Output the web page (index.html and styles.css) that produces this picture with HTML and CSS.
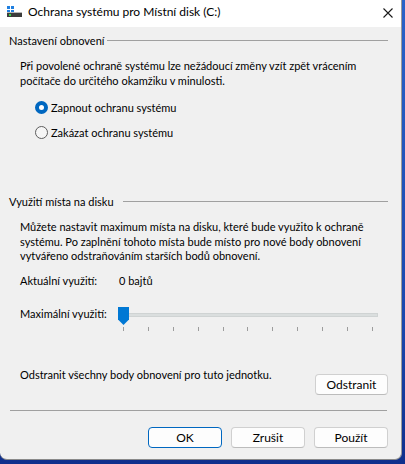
FILE: index.html
```html
<!DOCTYPE html>
<html lang="cs">
<head>
<meta charset="utf-8">
<title>Ochrana systému</title>
<link rel="stylesheet" href="styles.css">
</head>
<body>
<div class="window">
  <div class="titlebar">
    <svg class="app-icon" width="16" height="12" viewBox="0 0 16 12">
      <rect x="0" y="0" width="3" height="3" fill="#1f7fe0"/>
      <rect x="4" y="0" width="3" height="3" fill="#1f7fe0"/>
      <rect x="0" y="4" width="3" height="2" fill="#1f7fe0"/>
      <rect x="4" y="4" width="3" height="2" fill="#1f7fe0"/>
      <rect x="0" y="6" width="15" height="1" fill="#b8b8b8"/>
      <rect x="0" y="7" width="15" height="4" fill="#3c3c3c"/>
      <rect x="2" y="8" width="2" height="2" fill="#37d04a"/>
    </svg>
    <span class="title">Ochrana systému pro Místní disk (C:)</span>
    <svg class="close" width="10" height="10" viewBox="0 0 10 10">
      <path d="M0.5 0.5 L9.5 9.5 M9.5 0.5 L0.5 9.5" stroke="#1a1a1a" stroke-width="1.1" fill="none"/>
    </svg>
  </div>
  <div class="content">
    <div class="group-head group-head--first">
      <span class="group-label">Nastavení obnovení</span>
      <span class="group-line"></span>
    </div>
    <p class="para para--first">Při povolené ochraně systému lze nežádoucí změny vzít zpět vrácením<br>počítače do určitého okamžiku v minulosti.</p>
    <div class="radio radio--first">
      <span class="radio-dot radio-dot--on"></span>
      <span>Zapnout ochranu systému</span>
    </div>
    <div class="radio radio--second">
      <span class="radio-dot"></span>
      <span>Zakázat ochranu systému</span>
    </div>

    <div class="group-head group-head--second">
      <span class="group-label">Využití místa na disku</span>
      <span class="group-line"></span>
    </div>
    <p class="para para--second">Můžete nastavit maximum místa na disku, které bude využito k ochraně<br>systému. Po zaplnění tohoto místa bude místo pro nové body obnovení<br>vytvářeno odstraňováním starších bodů obnovení.</p>
    <div class="info-row">
      <span class="info-label">Aktuální využití:</span>
      <span>0 bajtů</span>
    </div>
    <div class="slider-row">
      <span class="slider-label">Maximální využití:</span>
      <div class="slider">
        <div class="track"></div>
        <div class="ticks">
          <i></i><i></i><i></i><i></i><i></i><i></i><i></i><i></i><i></i><i></i><i></i>
        </div>
        <div class="thumb"></div>
      </div>
    </div>
    <div class="delete-row">
      <span class="delete-text">Odstranit všechny body obnovení pro tuto jednotku.</span>
      <button class="btn btn--delete">Odstranit</button>
    </div>
    <div class="separator"></div>
    <div class="buttons">
      <button class="btn btn--wide btn--default">OK</button>
      <button class="btn btn--wide">Zrušit</button>
      <button class="btn btn--wide">Použít</button>
    </div>
  </div>
</div>
</body>
</html>
```

FILE: styles.css
```css
* { box-sizing: border-box; }
html, body {
  margin: 0;
  padding: 0;
}
body {
  width: 405px;
  height: 464px;
  overflow: hidden;
  background: linear-gradient(180deg, #2a62c8 0%, #1a47ad 70%, #0f2f8c 100%);
  font-family: Lato, "Liberation Sans", sans-serif;
  font-size: 11px;
  color: #000;
  white-space: nowrap;
}
.window {
  width: 402px;
  height: 460px;
  background: #f0f0f0;
  border-right: 1px solid #9a9a9a;
  border-bottom: 1px solid #8a8a8a;
  border-radius: 0 0 7px 7px;
  overflow: hidden;
  display: flex;
  flex-direction: column;
}
.titlebar {
  height: 27px;
  background: #ffffff;
  display: flex;
  align-items: center;
  padding-left: 7px;
  flex-shrink: 0;
}
.app-icon { margin-top: -3px; }
.title {
  margin-left: 5px;
  margin-top: -4px;
  font-size: 12px;
  line-height: 15px;
  color: #000;
}
.close { margin-left: auto; margin-right: 8px; margin-top: -2px; }

.content {
  padding: 6px 13px 0 9px;
  line-height: 15px;
}
.group-head {
  display: flex;
  align-items: center;
  height: 15px;
}
.group-label { flex-shrink: 0; }
.group-head--first .group-label { width: 98px; }
.group-head--second .group-label { width: 114px; }
.group-line {
  flex: 1;
  height: 1px;
  background: #a0a0a0;
}
.para {
  margin: 0;
  padding-left: 11px;
  line-height: 14.5px;
}
.para--first { margin-top: 11px; }
.para--second { margin-top: 11px; }

.radio {
  display: flex;
  align-items: center;
  padding-left: 26px;
  height: 15px;
}
.radio--first { margin-top: 12px; }
.radio--second { margin-top: 10px; }
.radio-dot {
  width: 13px;
  height: 13px;
  border-radius: 50%;
  border: 1px solid #5d5d5d;
  background: #f6f6f6;
  margin-right: 3px;
  flex-shrink: 0;
}
.radio-dot--on {
  border: 4px solid #0067c0;
  background: #ffffff;
}
.group-head--second { margin-top: 54px; }

.info-row {
  display: flex;
  padding-left: 11px;
  margin-top: 9.5px;
  height: 15px;
}
.info-label { width: 99px; flex-shrink: 0; }

.slider-row {
  display: flex;
  align-items: flex-start;
  padding-left: 11px;
  margin-top: 18px;
}
.slider-label { width: 98px; flex-shrink: 0; }
.slider {
  position: relative;
  width: 260px;
  height: 25px;
  margin-top: 1px;
}
.track {
  margin-left: 10px;
  margin-top: 6px;
  height: 4px;
  background: #dadede;
  border: 1px solid #cfd3d3;
}
.ticks {
  display: flex;
  justify-content: space-between;
  width: 250px;
  margin-left: 5px;
  margin-top: 10px;
  height: 4px;
}
.ticks i {
  display: block;
  width: 1px;
  height: 4px;
  background: #9c9c9c;
}
.thumb {
  position: absolute;
  left: 0;
  top: 0;
  width: 11px;
  height: 18px;
  background: #0078d4;
  clip-path: polygon(0 0, 100% 0, 100% 70%, 50% 100%, 0 70%);
}

.delete-row {
  display: flex;
  justify-content: space-between;
  align-items: flex-start;
  padding-left: 11px;
  margin-top: 35px;
}
.btn {
  font-family: inherit;
  font-size: 12px;
  color: #000;
  width: 73px;
  height: 21px;
  padding: 0;
  background: #fdfdfd;
  border: 1px solid #d0d0d0;
  border-bottom-color: #bcbcbc;
  border-radius: 4px;
  line-height: 18px;
}
.btn--wide { width: 74px; }
.btn--delete { margin-top: 7px; }
.separator {
  height: 1px;
  background: #a0a0a0;
  margin: 15px 1px 0 1px;
}
.buttons {
  display: flex;
  justify-content: flex-end;
  gap: 9px;
  margin-top: 16px;
}
.btn--default {
  border: 1px solid #0067c0;
}
```
